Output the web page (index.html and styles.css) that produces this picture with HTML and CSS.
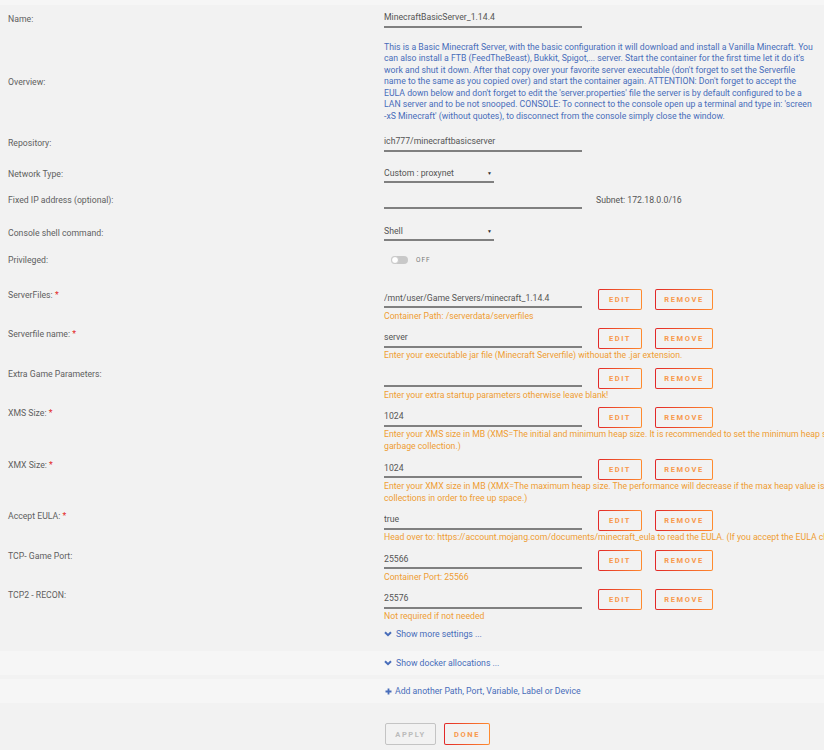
FILE: index.html
```
<!DOCTYPE html>
<html lang="en">
<head>
    <meta charset="UTF-8">
    <meta name="viewport" content="width=device-width, initial-scale=1.0">
    <title>Update Container</title>
    <link rel="stylesheet" href="styles.css">
</head>
<body>

    <div class="page">
        <div class="strip"></div>

        <div class="row r-name">
            <div class="label">Name:</div>
            <div class="value"><input class="field" type="text" value="MinecraftBasicServer_1.14.4"></div>
        </div>

        <div class="row r-overview">
            <div class="label">Overview:</div>
            <div class="value overview">This is a Basic Minecraft Server, with the basic configuration it will download and install a Vanilla Minecraft. You can also install a FTB (FeedTheBeast), Bukkit, Spigot,... server. Start the container for the first time let it do it's work and shut it down. After that copy over your favorite server executable (don't forget to set the Serverfile name to the same as you copied over) and start the container again. ATTENTION: Don't forget to accept the EULA down below and don't forget to edit the 'server.properties' file the server is by default configured to be a LAN server and to be not snooped. CONSOLE: To connect to the console open up a terminal and type in: 'screen -xS Minecraft' (without quotes), to disconnect from the console simply close the window.</div>
        </div>

        <div class="row r-repo">
            <div class="label">Repository:</div>
            <div class="value"><input class="field" type="text" value="ich777/minecraftbasicserver"></div>
        </div>

        <div class="row r-net">
            <div class="label">Network Type:</div>
            <div class="value"><div class="select">Custom : proxynet<span class="arrow">&#9660;</span></div></div>
        </div>

        <div class="row r-ip">
            <div class="label">Fixed IP address (optional):</div>
            <div class="value inline">
                <input class="field" type="text" value="">
                <span class="subnet">Subnet: 172.18.0.0/16</span>
            </div>
        </div>

        <div class="row r-shell">
            <div class="label">Console shell command:</div>
            <div class="value"><div class="select">Shell<span class="arrow">&#9660;</span></div></div>
        </div>

        <div class="row r-priv">
            <div class="label">Privileged:</div>
            <div class="value inline">
                <span class="toggle"><span class="knob"></span></span>
                <span class="toggle-text">OFF</span>
            </div>
        </div>

        <div class="row cfg first">
            <div class="label">ServerFiles: <span class="req">*</span></div>
            <div class="value">
                <div class="line">
                    <input class="field" type="text" value="/mnt/user/Game Servers/minecraft_1.14.4">
                    <button class="btn btn-edit">EDIT</button>
                    <button class="btn btn-remove">REMOVE</button>
                </div>
                <div class="help">Container Path: /serverdata/serverfiles</div>
            </div>
        </div>

        <div class="row cfg">
            <div class="label">Serverfile name: <span class="req">*</span></div>
            <div class="value">
                <div class="line">
                    <input class="field" type="text" value="server">
                    <button class="btn btn-edit">EDIT</button>
                    <button class="btn btn-remove">REMOVE</button>
                </div>
                <div class="help">Enter your executable jar file (Minecraft Serverfile) withouat the .jar extension.</div>
            </div>
        </div>

        <div class="row cfg">
            <div class="label">Extra Game Parameters:</div>
            <div class="value">
                <div class="line">
                    <input class="field" type="text" value="">
                    <button class="btn btn-edit">EDIT</button>
                    <button class="btn btn-remove">REMOVE</button>
                </div>
                <div class="help">Enter your extra startup parameters otherwise leave blank!</div>
            </div>
        </div>

        <div class="row cfg">
            <div class="label">XMS Size: <span class="req">*</span></div>
            <div class="value">
                <div class="line">
                    <input class="field" type="text" value="1024">
                    <button class="btn btn-edit">EDIT</button>
                    <button class="btn btn-remove">REMOVE</button>
                </div>
                <div class="help">Enter your XMS size in MB (XMS=The initial and minimum heap size. It is recommended to set the minimum heap size equal to the maximum heap size to minimize<br>garbage collection.)</div>
            </div>
        </div>

        <div class="row cfg">
            <div class="label">XMX Size: <span class="req">*</span></div>
            <div class="value">
                <div class="line">
                    <input class="field" type="text" value="1024">
                    <button class="btn btn-edit">EDIT</button>
                    <button class="btn btn-remove">REMOVE</button>
                </div>
                <div class="help">Enter your XMX size in MB (XMX=The maximum heap size. The performance will decrease if the max heap value is set lower than is required for live data. This will force frequent garbage<br>collections in order to free up space.)</div>
            </div>
        </div>

        <div class="row cfg">
            <div class="label">Accept EULA: <span class="req">*</span></div>
            <div class="value">
                <div class="line">
                    <input class="field" type="text" value="true">
                    <button class="btn btn-edit">EDIT</button>
                    <button class="btn btn-remove">REMOVE</button>
                </div>
                <div class="help">Head over to: https://account.mojang.com/documents/minecraft_eula to read the EULA. (If you accept the EULA change the value to 'true')</div>
            </div>
        </div>

        <div class="row cfg">
            <div class="label">TCP- Game Port:</div>
            <div class="value">
                <div class="line">
                    <input class="field" type="text" value="25566">
                    <button class="btn btn-edit">EDIT</button>
                    <button class="btn btn-remove">REMOVE</button>
                </div>
                <div class="help">Container Port: 25566</div>
            </div>
        </div>

        <div class="row cfg">
            <div class="label">TCP2 - RECON:</div>
            <div class="value">
                <div class="line">
                    <input class="field" type="text" value="25576">
                    <button class="btn btn-edit">EDIT</button>
                    <button class="btn btn-remove">REMOVE</button>
                </div>
                <div class="help">Not required if not needed</div>
            </div>
        </div>

        <div class="row r-more">
            <div class="label"></div>
            <div class="value link">
                <svg class="icon" width="8" height="6" viewBox="0 0 8 6"><polyline points="1,1.2 4,4.2 7,1.2" fill="none" stroke="#486dba" stroke-width="2"/></svg>Show more settings ...
            </div>
        </div>

        <div class="band b-docker">
            <div class="label"></div>
            <div class="value link">
                <svg class="icon" width="8" height="6" viewBox="0 0 8 6"><polyline points="1,1.2 4,4.2 7,1.2" fill="none" stroke="#486dba" stroke-width="2"/></svg>Show docker allocations ...
            </div>
        </div>

        <div class="band b-add">
            <div class="label"></div>
            <div class="value link">
                <svg class="icon plus" width="7" height="7" viewBox="0 0 7 7"><path d="M3.5 0.5v6M0.5 3.5h6" stroke="#486dba" stroke-width="1.8"/></svg>Add another Path, Port, Variable, Label or Device
            </div>
        </div>

        <div class="row r-actions">
            <div class="label"></div>
            <div class="value inline">
                <button class="btn btn-apply" disabled>APPLY</button>
                <button class="btn btn-done">DONE</button>
            </div>
        </div>
    </div>

</body>
</html>
```

FILE: styles.css
```
html, body {
    margin: 0;
    padding: 0;
    background-color: #f2f2f2;
    overflow-x: hidden;
}
body {
    font-family: 'Roboto', 'Liberation Sans', sans-serif;
    font-size: 8.7px;
    color: #555;
}
.page {
    width: 824px;
}
.strip {
    height: 5px;
    background-color: #f6f6f6;
}
.row, .band {
    display: grid;
    grid-template-columns: 376px 1fr;
    align-items: center;
    padding-left: 8px;
}
.label {
    color: #5f5f5f;
    line-height: 12px;
}
.req {
    color: #e22828;
}
.value.inline {
    display: flex;
    align-items: center;
    min-height: 17px;
}

/* spacing of the top rows */
.r-name { padding-top: 4.5px; }
.r-overview { padding-top: 14px; }
.r-repo { padding-top: 11.5px; }
.r-net { padding-top: 14px; }
.r-ip { padding-top: 8.5px; }
.r-shell { padding-top: 15px; }
.r-priv { padding-top: 10.5px; }

.field {
    display: block;
    box-sizing: border-box;
    width: 198px;
    height: 18px;
    margin: 0;
    padding: 0 0 1px 0;
    border: none;
    border-bottom: 2px solid #808080;
    background: transparent;
    font-family: inherit;
    font-size: 8.7px;
    color: #555;
    outline: none;
}
.overview {
    color: #486dba;
    line-height: 11.5px;
    padding-right: 10px;
}
.select {
    box-sizing: border-box;
    width: 110px;
    height: 17px;
    line-height: 15px;
    border-bottom: 2px solid #808080;
    display: flex;
    justify-content: space-between;
    color: #555;
}
.arrow {
    font-size: 5px;
    color: #333;
    padding-right: 2px;
}
.subnet {
    margin-left: 14px;
    margin-top: -1px;
    color: #555;
}
.toggle {
    position: relative;
    display: inline-block;
    width: 17px;
    height: 8px;
    margin-left: 7px;
    border-radius: 4px;
    background-color: #c8c8c8;
}
.knob {
    position: absolute;
    left: 0;
    top: 0;
    box-sizing: border-box;
    width: 8px;
    height: 8px;
    border-radius: 50%;
    background-color: #fff;
    border: 1px solid #c8c8c8;
}
.toggle-text {
    margin-left: 8px;
    font-size: 6.5px;
    letter-spacing: 1px;
    color: #777;
}

/* config rows with edit/remove buttons */
.row.cfg {
    align-items: start;
    padding-top: 6.5px;
}
.row.cfg.first {
    padding-top: 20px;
}
.line {
    display: flex;
    align-items: center;
    height: 21px;
}
.help {
    color: #ef9d33;
    line-height: 12px;
    white-space: nowrap;
}
.btn {
    box-sizing: border-box;
    height: 21px;
    padding: 0;
    border: 1px solid transparent;
    border-radius: 2px;
    background: linear-gradient(#f2f2f2, #f2f2f2) padding-box,
                linear-gradient(90deg, #e22828, #ff8c2f) border-box;
    font-family: 'Roboto', 'Liberation Sans', sans-serif;
    font-size: 7.5px;
    font-weight: bold;
    letter-spacing: 1.6px;
    color: #f8994c;
    cursor: pointer;
}
.btn-edit {
    width: 44px;
    margin-left: 16px;
}
.btn-remove {
    width: 58px;
    margin-left: 13px;
}

.r-more {
    padding-top: 6px;
    line-height: 12px;
}
.link {
    color: #486dba;
    display: flex;
    align-items: center;
}
.icon {
    margin-right: 4px;
}
.icon.plus {
    margin-left: 1px;
    margin-right: 3px;
}
.band {
    height: 24px;
    background-color: #f6f6f6;
}
.b-docker {
    margin-top: 11px;
}
.b-add {
    margin-top: 4px;
}
.r-actions {
    padding-top: 20px;
    padding-bottom: 10px;
}
.btn-apply {
    width: 51px;
    height: 22px;
    margin-left: 1px;
    background: #f2f2f2;
    border: 1px solid #c4c4c4;
    color: #bbb;
    cursor: default;
}
.btn-done {
    width: 46px;
    height: 22px;
    margin-left: 8px;
}
```
